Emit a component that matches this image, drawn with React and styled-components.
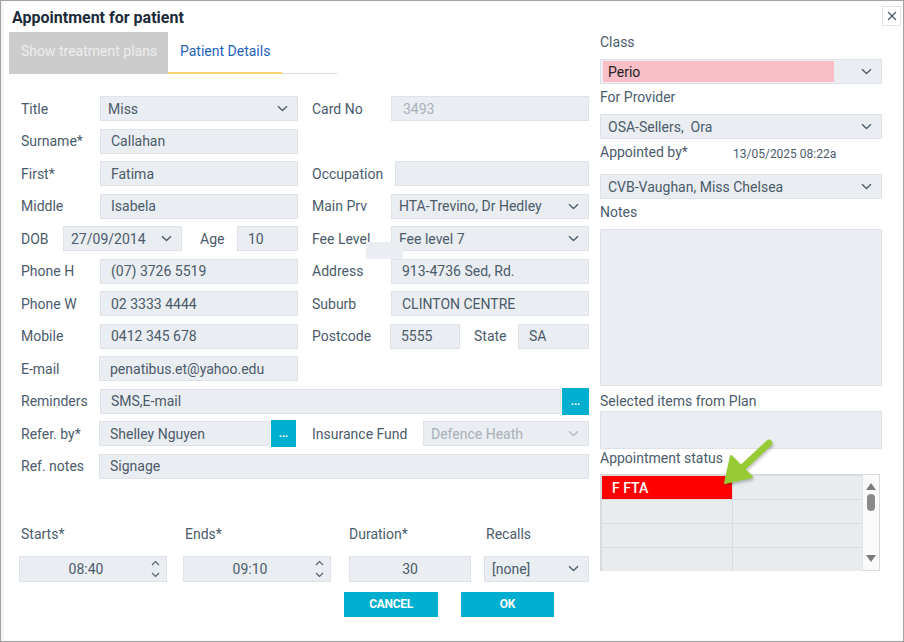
import styled, { createGlobalStyle } from 'styled-components';

const GlobalStyle = createGlobalStyle`
  html, body { margin: 0; padding: 0; background: #fff; }
  body { font-family: Roboto, "Liberation Sans", sans-serif; }
  * { box-sizing: border-box; }
`;

const TEXT = '#4b5b6b';
const FIELD_BG = '#eaedf1';
const FIELD_BORDER = '#dfe3e8';
const MUTED = '#a9b1b9';
const CYAN = '#00aecf';

function Chevron({ muted }) {
  return (
    <svg width="11" height="7" viewBox="0 0 11 7">
      <path d="M1 1.2l4.5 4.3L10 1.2" fill="none" stroke={muted ? '#b4bbc2' : '#4f5e6d'} strokeWidth="1.4" />
    </svg>
  );
}

function Spinner() {
  return (
    <svg width="9" height="20" viewBox="0 0 9 20">
      <path d="M1 6l3.5-3.5L8 6" fill="none" stroke="#56636f" strokeWidth="1.2" />
      <path d="M1 14l3.5 3.5L8 14" fill="none" stroke="#56636f" strokeWidth="1.2" />
    </svg>
  );
}

export default function App() {
  return (
    <>
      <GlobalStyle />
      <Window>
        <Header>
          <Title>Appointment for patient</Title>
          <Close>
            <svg width="10" height="10" viewBox="0 0 10 10">
              <path d="M1 1l8 8M9 1l-8 8" stroke="#4a5564" strokeWidth="1.2" />
            </svg>
          </Close>
        </Header>
        <Body>
          <LeftCol>
            <Tabs>
              <Tab $disabled>Show treatment plans</Tab>
              <Tab $active>Patient Details</Tab>
              <TabRest />
            </Tabs>
            <Form>
              <LeftLabel>Title</LeftLabel>
              <Select>Miss<Chevron /></Select>
              <RightLabel>Card No</RightLabel>
              <Field $muted $pad={11}>3493</Field>

              <LeftLabel>Surname*</LeftLabel>
              <Field>Callahan</Field>

              <LeftLabel>First*</LeftLabel>
              <Field>Fatima</Field>
              <RightLabel>Occupation</RightLabel>
              <Field $shift={4} />

              <LeftLabel>Middle</LeftLabel>
              <Field>Isabela</Field>
              <RightLabel>Main Prv</RightLabel>
              <Select>HTA-Trevino, Dr Hedley<Chevron /></Select>

              <Cell $span={2}>
                <Label $w={42}>DOB</Label>
                <Select $w={119}>27/09/2014<Chevron /></Select>
                <Label $w={37} $ml={18}>Age</Label>
                <Field $w={61}>10</Field>
              </Cell>
              <RightLabel>Fee Level</RightLabel>
              <GlitchWrap>
                <Select>Fee level 7<Chevron /></Select>
                <Glitch />
              </GlitchWrap>

              <LeftLabel>Phone H</LeftLabel>
              <Field>(07) 3726 5519</Field>
              <RightLabel>Address</RightLabel>
              <Field>913-4736 Sed, Rd.</Field>

              <LeftLabel>Phone W</LeftLabel>
              <Field>02 3333 4444</Field>
              <RightLabel>Suburb</RightLabel>
              <Field>CLINTON CENTRE</Field>

              <LeftLabel>Mobile</LeftLabel>
              <Field>0412 345 678</Field>
              <RightLabel>Postcode</RightLabel>
              <Cell>
                <Field $w={70} $shift={-1}>5555</Field>
                <Label $w={44} $ml={14}>State</Label>
                <Field $w={71}>SA</Field>
              </Cell>

              <LeftLabel>E-mail</LeftLabel>
              <Field $shift={-1}>penatibus.et@yahoo.edu</Field>

              <LeftLabel>Reminders</LeftLabel>
              <Cell $span={4}>
                <Field $grow>SMS,E-mail</Field>
                <DotButton $w={27} $ml={1}>...</DotButton>
              </Cell>

              <LeftLabel>Refer. by*</LeftLabel>
              <Cell>
                <Field $w={171} $shift={-1}>Shelley Nguyen</Field>
                <DotButton $w={25} $ml={1}>...</DotButton>
              </Cell>
              <Cell $col={4} $span={2}>
                <Label>Insurance Fund</Label>
                <Select $w={166} $muted $push>Defence Heath<Chevron muted /></Select>
              </Cell>

              <LeftLabel>Ref. notes</LeftLabel>
              <Field $span={4} $shift={-1}>Signage</Field>
            </Form>

            <Bottom>
              <BottomLabel>Starts*</BottomLabel>
              <BottomLabel $col={3}>Ends*</BottomLabel>
              <BottomLabel $col={5} $flush>Duration*</BottomLabel>
              <BottomLabel $col={7}>Recalls</BottomLabel>

              <TimeField>08:40<SpinBox><Spinner /></SpinBox></TimeField>
              <TimeField $col={3}>09:10<SpinBox><Spinner /></SpinBox></TimeField>
              <Field $col={5} $center $h={26}>30</Field>
              <Select $col={7} $h={26}>[none]<Chevron /></Select>
            </Bottom>

            <Actions>
              <ActionButton $w={94}>CANCEL</ActionButton>
              <ActionButton $w={93}>OK</ActionButton>
            </Actions>
          </LeftCol>

          <RightCol>
            <RLabel $mt={1}>Class</RLabel>
            <Select $mt={8} $h={25} $pad={2} $dark>
              <ClassFill>Perio</ClassFill>
              <Chevron />
            </Select>
            <RLabel $mt={4}>For Provider</RLabel>
            <Select $mt={8} $h={25}>OSA-Sellers,&nbsp; Ora<Chevron /></Select>
            <AppointedRow>
              <Label $w={133}>Appointed by*</Label>
              <Stamp>13/05/2025 08:22a</Stamp>
            </AppointedRow>
            <Select $mt={12} $h={25}>CVB-Vaughan, Miss Chelsea<Chevron /></Select>
            <RLabel $mt={4}>Notes</RLabel>
            <Field $mt={8} $h={157} />
            <RLabel $mt={6}>Selected items from Plan</RLabel>
            <Field $mt={1} $h={38} />
            <RLabel>Appointment status</RLabel>
            <StatusGrid>
              <StatusTable>
                <StatusCell $red>F FTA</StatusCell>
                <StatusCell />
                <StatusCell />
                <StatusCell />
                <StatusCell />
                <StatusCell />
                <StatusCell />
                <StatusCell />
              </StatusTable>
              <Scrollbar>
                <svg width="10" height="7" viewBox="0 0 10 7"><path d="M0 7L5 0l5 7z" fill="#7b7b7b" /></svg>
                <Thumb />
                <Grow />
                <svg width="10" height="7" viewBox="0 0 10 7"><path d="M0 0l5 7 5-7z" fill="#7b7b7b" /></svg>
              </Scrollbar>
            </StatusGrid>
          </RightCol>
        </Body>

        <Pointer width="62" height="56" viewBox="0 0 62 56">
          <path d="M53 8L25 34" stroke="#97cb35" strokeWidth="6.5" strokeLinecap="round" />
          <path d="M9 48L15 21L36 42z" fill="#97cb35" stroke="#97cb35" strokeWidth="2" strokeLinejoin="round" />
        </Pointer>
      </Window>
    </>
  );
}

const Window = styled.div`
  position: relative;
  width: 904px;
  height: 642px;
  border: 1px solid #a3a3a3;
  background: #fff;
  box-shadow: inset 2px 0 3px rgba(0, 0, 0, 0.06);
  overflow: hidden;
`;
const Header = styled.div`
  position: relative;
  height: 31px;
  padding: 8px 0 0 11px;
`;
const Title = styled.div`
  font-size: 16px;
  line-height: 18px;
  font-weight: 700;
  color: #1c2b3a;
`;
const Close = styled.div`
  position: absolute;
  top: 5px;
  right: 2px;
  width: 19px;
  height: 20px;
  border: 1px solid #e3e3e3;
  display: flex;
  align-items: center;
  justify-content: center;
  background: #fff;
`;
const Body = styled.div`
  display: flex;
  padding-left: 8px;
`;
const LeftCol = styled.div`
  width: 580px;
`;
const Tabs = styled.div`
  display: flex;
  height: 42px;
`;
const Tab = styled.div`
  padding: 10px 0 0 12px;
  font-size: 14px;
  line-height: 18px;
  width: ${(p) => (p.$disabled ? 159 : 114)}px;
  background: ${(p) => (p.$disabled ? '#cccccc' : '#fff')};
  color: ${(p) => (p.$disabled ? '#ececec' : '#1f63b8')};
  border-bottom: ${(p) => (p.$active ? '2px solid #f6d46a' : 'none')};
`;
const TabRest = styled.div`
  width: 55px;
  border-bottom: 1px solid #dcdcdc;
`;
const Form = styled.div`
  display: grid;
  grid-template-columns: 79px 198px 14px 79px 198px;
  grid-auto-rows: 25px;
  row-gap: 7.5px;
  margin-top: 22px;
  padding-left: 12px;
`;
const Label = styled.div`
  display: flex;
  align-items: center;
  flex: none;
  font-size: 14px;
  color: ${TEXT};
  white-space: nowrap;
  ${(p) => p.$w && `width: ${p.$w}px;`}
  ${(p) => p.$ml && `margin-left: ${p.$ml}px;`}
`;
const LeftLabel = styled(Label)`
  grid-column: 1;
`;
const RightLabel = styled(Label)`
  grid-column: 4;
`;
const Cell = styled.div`
  display: flex;
  align-items: stretch;
  ${(p) => p.$col && `grid-column-start: ${p.$col};`}
  ${(p) => p.$span && `grid-column-end: span ${p.$span};`}
`;
const Field = styled.div`
  display: flex;
  align-items: center;
  flex: ${(p) => (p.$grow ? '1' : 'none')};
  height: ${(p) => (p.$h ? `${p.$h}px` : 'auto')};
  padding: 0 10px 0 ${(p) => p.$pad ?? 10}px;
  justify-content: ${(p) => (p.$center ? 'center' : 'flex-start')};
  background: ${FIELD_BG};
  border: 1px solid ${FIELD_BORDER};
  font-size: 14px;
  color: ${(p) => (p.$muted ? MUTED : TEXT)};
  white-space: nowrap;
  ${(p) => p.$w && `width: ${p.$w}px;`}
  ${(p) => p.$shift && `margin-left: ${p.$shift}px;`}
  ${(p) => p.$mt && `margin-top: ${p.$mt}px;`}
  ${(p) => p.$col && `grid-column-start: ${p.$col};`}
  ${(p) => p.$span && `grid-column-end: span ${p.$span};`}
`;
const Select = styled(Field)`
  justify-content: space-between;
  padding: 0 9px 0 ${(p) => p.$pad ?? 7}px;
  color: ${(p) => (p.$muted ? MUTED : p.$dark ? '#222' : TEXT)};
  ${(p) => p.$push && 'margin-left: auto;'}
`;
const GlitchWrap = styled.div`
  position: relative;
  display: flex;
  & > ${Field} { flex: 1; }
`;
const Glitch = styled.div`
  position: absolute;
  left: -25px;
  top: 16px;
  width: 37px;
  height: 17px;
  background: ${FIELD_BG};
`;
const DotButton = styled.div`
  flex: none;
  width: ${(p) => p.$w}px;
  margin-left: ${(p) => p.$ml}px;
  margin-top: -1px;
  height: 27px;
  background: ${CYAN};
  color: #fff;
  font-size: 11px;
  font-weight: 700;
  display: flex;
  align-items: center;
  justify-content: center;
  line-height: 1;
`;
const Bottom = styled.div`
  display: grid;
  grid-template-columns: 148px 16px 148px 18px 122px 13px 105px;
  grid-template-rows: 18px 26px;
  row-gap: 13px;
  margin-top: 46px;
  padding-left: 10px;
`;
const BottomLabel = styled(Label)`
  grid-column-start: ${(p) => p.$col ?? 1};
  padding-left: ${(p) => (p.$flush ? 0 : 2)}px;
`;
const TimeField = styled(Field)`
  grid-column-start: ${(p) => p.$col ?? 1};
  position: relative;
  justify-content: center;
  padding: 0 22px 0 8px;
  height: 26px;
`;
const SpinBox = styled.div`
  position: absolute;
  right: 6px;
  top: 2px;
  display: flex;
`;
const Actions = styled.div`
  display: flex;
  gap: 23px;
  margin: 10px 0 0 335px;
`;
const ActionButton = styled.div`
  width: ${(p) => p.$w}px;
  height: 25px;
  background: ${CYAN};
  color: #fff;
  font-size: 12px;
  font-weight: 700;
  letter-spacing: -0.3px;
  display: flex;
  align-items: center;
  justify-content: center;
`;
const RightCol = styled.div`
  width: 282px;
  margin-left: 11px;
  display: flex;
  flex-direction: column;
`;
const RLabel = styled.div`
  font-size: 14px;
  line-height: 18px;
  color: ${TEXT};
  margin-top: ${(p) => p.$mt ?? 0}px;
`;
const ClassFill = styled.div`
  width: 231px;
  height: 21px;
  background: #f9bec6;
  padding-left: 5px;
  display: flex;
  align-items: center;
`;
const AppointedRow = styled.div`
  display: flex;
  align-items: baseline;
  margin-top: 4px;
  line-height: 18px;
`;
const Stamp = styled.span`
  font-size: 12px;
  color: ${TEXT};
  position: relative;
  top: 1px;
`;
const StatusGrid = styled.div`
  display: flex;
  width: 280px;
  height: 97px;
  margin-top: 7px;
  border: 1px solid #d6dade;
  background: #fff;
`;
const StatusTable = styled.div`
  flex: 1;
  display: grid;
  grid-template-columns: 130px 1fr;
  grid-auto-rows: 23px;
  gap: 1px;
  padding: 1px 0 0 1px;
  background: #d9dde1;
`;
const StatusCell = styled.div`
  background: ${(p) => (p.$red ? '#ff0000' : '#e9ecef')};
  color: #fff;
  font-size: 14px;
  font-weight: 500;
  padding-left: 10px;
  display: flex;
  align-items: center;
`;
const Scrollbar = styled.div`
  width: 17px;
  display: flex;
  flex-direction: column;
  align-items: center;
  padding: 8px 0 8px;
  background: #fafafa;
  border-left: 1px solid #e2e2e2;
`;
const Thumb = styled.div`
  width: 8px;
  height: 17px;
  border-radius: 4px;
  background: #8a8a8a;
  margin-top: 4px;
`;
const Grow = styled.div`
  flex: 1;
`;
const Pointer = styled.svg`
  position: absolute;
  left: 715px;
  top: 434px;
  filter: drop-shadow(1px 2px 1.5px rgba(0, 0, 0, 0.25));
`;
